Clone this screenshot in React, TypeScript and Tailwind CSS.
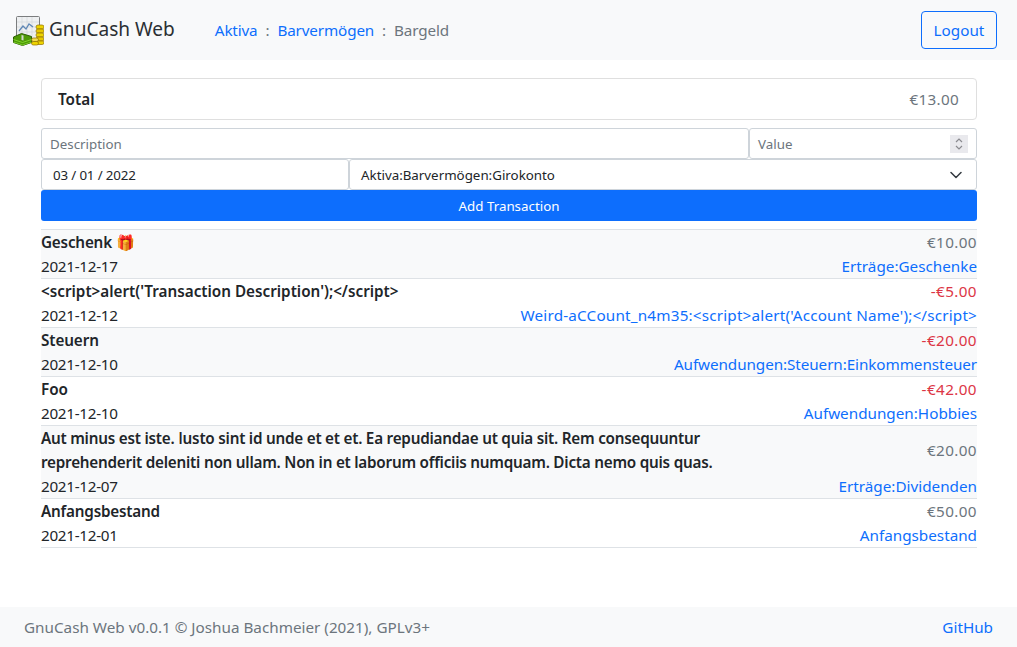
import React from "react";

const rows: { d: React.ReactNode; dt?: string; date: string; v: string; neg: boolean; acc: string; at?: string }[] = [
  { d: "Geschenk 🎁", dt: "tracking-[-0.2px]", date: "2021-12-17", v: "€10.00", neg: false, acc: "Erträge:Geschenke" },
  { d: "<script>alert('Transaction Description');</script>", date: "2021-12-12", v: "-€5.00", neg: true, acc: "Weird-aCCount_n4m35:<script>alert('Account Name');</script>", at: "tracking-[0.19px]" },
  { d: "Steuern", dt: "tracking-[-0.1px]", date: "2021-12-10", v: "-€20.00", neg: true, acc: "Aufwendungen:Steuern:Einkommensteuer", at: "tracking-[-0.08px]" },
  { d: "Foo", date: "2021-12-10", v: "-€42.00", neg: true, acc: "Aufwendungen:Hobbies" },
  {
    d: (
      <>
        Aut minus est iste. <span className="font-['Open_Sans']">I</span>usto sint id unde et et et. Ea repudiandae ut quia sit. Rem consequuntur reprehenderit deleniti non ullam. Non in et laborum officiis numquam. Dicta nemo quis quas.
      </>
    ),
    dt: "tracking-[-0.23px]",
    date: "2021-12-07",
    v: "€20.00",
    neg: false,
    acc: "Erträge:Dividenden",
  },
  { d: "Anfangsbestand", dt: "tracking-[-0.2px]", date: "2021-12-01", v: "€50.00", neg: false, acc: "Anfangsbestand" },
];

function Logo() {
  return (
    <svg width="32" height="32" viewBox="0 0 32 32" className="block shrink-0">
      <rect x="4.5" y="2.5" width="23" height="23" rx="1" fill="#eef0f1" stroke="#7b7d7e" />
      <path d="M5 8h22M5 13h22M5 18h22M10 3v22M15 3v22M20 3v22" stroke="#d3d7da" strokeWidth="0.7" />
      <path d="M7 17l4-5 3 3 3-5 4 3" stroke="#5f87b5" strokeWidth="1.3" fill="none" />
      <path d="M1.5 23l8-3.5 10 3v6l-9 3-9-3z" fill="#4e9a06" stroke="#2c5e03" />
      <path d="M1.5 25.5l9 3 9-3M1.5 28l9 3 9-3" stroke="#8ae234" strokeWidth="0.8" fill="none" />
      <path d="M9.5 21l2 0.5v5l-2-0.5z" fill="#d3d7cf" />
      <rect x="24" y="11" width="8" height="4" rx="2" fill="#edd400" stroke="#8f6f00" strokeWidth="0.7" />
      <rect x="24" y="15" width="8" height="4" rx="2" fill="#e6c800" stroke="#8f6f00" strokeWidth="0.7" />
      <rect x="24" y="19" width="8" height="4" rx="2" fill="#edd400" stroke="#8f6f00" strokeWidth="0.7" />
      <rect x="24" y="23" width="8" height="4" rx="2" fill="#e6c800" stroke="#8f6f00" strokeWidth="0.7" />
      <rect x="24" y="27" width="8" height="3.5" rx="1.75" fill="#edd400" stroke="#8f6f00" strokeWidth="0.7" />
      <rect x="19.5" y="24" width="7" height="3.5" rx="1.75" fill="#f0dc50" stroke="#8f6f00" strokeWidth="0.7" />
      <rect x="19.5" y="27.5" width="7" height="3.5" rx="1.75" fill="#edd400" stroke="#8f6f00" strokeWidth="0.7" />
    </svg>
  );
}

export default function App() {
  return (
    <div className="h-[647px] flex flex-col bg-white text-[#212529] text-[15.25px] leading-6 font-['Noto_Sans',sans-serif]">
      <nav className="h-[60px] shrink-0 bg-[#f8f9fa] flex items-center pl-3 pr-5">
        <Logo />
        <span className="ml-[5px] text-[19.06px] leading-[30px] mb-[3px] text-[#2b2f33]">GnuCash Web</span>
        <div className="ml-10 flex items-center tracking-[-0.15px]">
          <a className="text-[#0d6efd]">Aktiva</a>
          <span className="px-2 text-[#6c757d]">:</span>
          <a className="text-[#0d6efd]">Barvermögen</a>
          <span className="px-2 text-[#6c757d]">:</span>
          <span className="text-[#6c757d]">Bargeld</span>
        </div>
        <button className="ml-auto h-[38px] w-[76px] rounded border border-[#0d6efd] text-[#0d6efd]">Logout</button>
      </nav>

      <main className="flex-1 pl-[41px] pr-[40px] pt-[18px]">
        <div className="h-[42px] flex items-center justify-between border border-[#dfdfdf] rounded pl-4 pr-[17px]">
          <b className="font-semibold">Total</b>
          <span className="text-[#6c757d] tracking-[0.3px]">€13.00</span>
        </div>

        <div className="mt-2 text-[13.34px]">
          <div className="flex h-[31px]">
            <div className="w-[708px] border border-[#ced4da] rounded-[3px] px-2 flex items-center text-[#6c757d]">Description</div>
            <div className="flex-1 border border-[#ced4da] rounded-[3px] px-2 flex items-center justify-between text-[#6c757d]">
              <span>Value</span>
              <span className="w-[18px] h-[18px] bg-[#e9e9ed] flex items-center justify-center">
                <svg width="10" height="14" viewBox="0 0 10 14" fill="none" stroke="#8a8a8f" strokeWidth="1.2">
                  <path d="M2 5l3-3 3 3M2 9l3 3 3-3" />
                </svg>
              </span>
            </div>
          </div>
          <div className="flex h-[31px]">
            <div className="w-[308px] border border-[#ced4da] rounded-[3px] px-[11px] flex items-center tracking-[-0.15px]">03 / 01 / 2022</div>
            <div className="flex-1 border border-[#ced4da] rounded-[3px] pl-[11px] pr-[14px] flex items-center justify-between">
              <span>Aktiva:Barvermögen:Girokonto</span>
              <svg width="12" height="8" viewBox="0 0 12 8" fill="none" stroke="#343a40" strokeWidth="1.5" strokeLinecap="round" strokeLinejoin="round">
                <path d="M1 1.5l5 5 5-5" />
              </svg>
            </div>
          </div>
          <button className="w-full h-[31px] block bg-[#0d6efd] text-white rounded-[3px]">Add Transaction</button>
        </div>

        <div className="mt-2 border-t border-[#dee2e6]">
          {rows.map((r, i) => (
            <div key={i} className={`border-b border-[#dee2e6] ${i % 2 === 0 ? "bg-[#f8f9fa]" : "bg-white"}`}>
              <div className="flex justify-between items-center">
                <div className={`w-[702px] font-semibold ${r.dt ?? ""}`}>{r.d}</div>
                <div className={`tracking-[0.4px] ${r.neg ? "text-[#dc3545]" : "text-[#6c757d]"}`}>{r.v}</div>
              </div>
              <div className="flex justify-between">
                <div className="tracking-[-0.3px]">{r.date}</div>
                <a className={`text-[#0d6efd] ${r.at ?? ""}`}>{r.acc}</a>
              </div>
            </div>
          ))}
        </div>
      </main>

      <footer className="h-10 shrink-0 bg-[#f8f9fa] flex items-center justify-between px-6 text-[#6c757d]">
        <span>GnuCash Web v0.0.1 © Joshua Bachmeier (2021), GPLv3+</span>
        <a className="text-[#0d6efd]">GitHub</a>
      </footer>
    </div>
  );
}
